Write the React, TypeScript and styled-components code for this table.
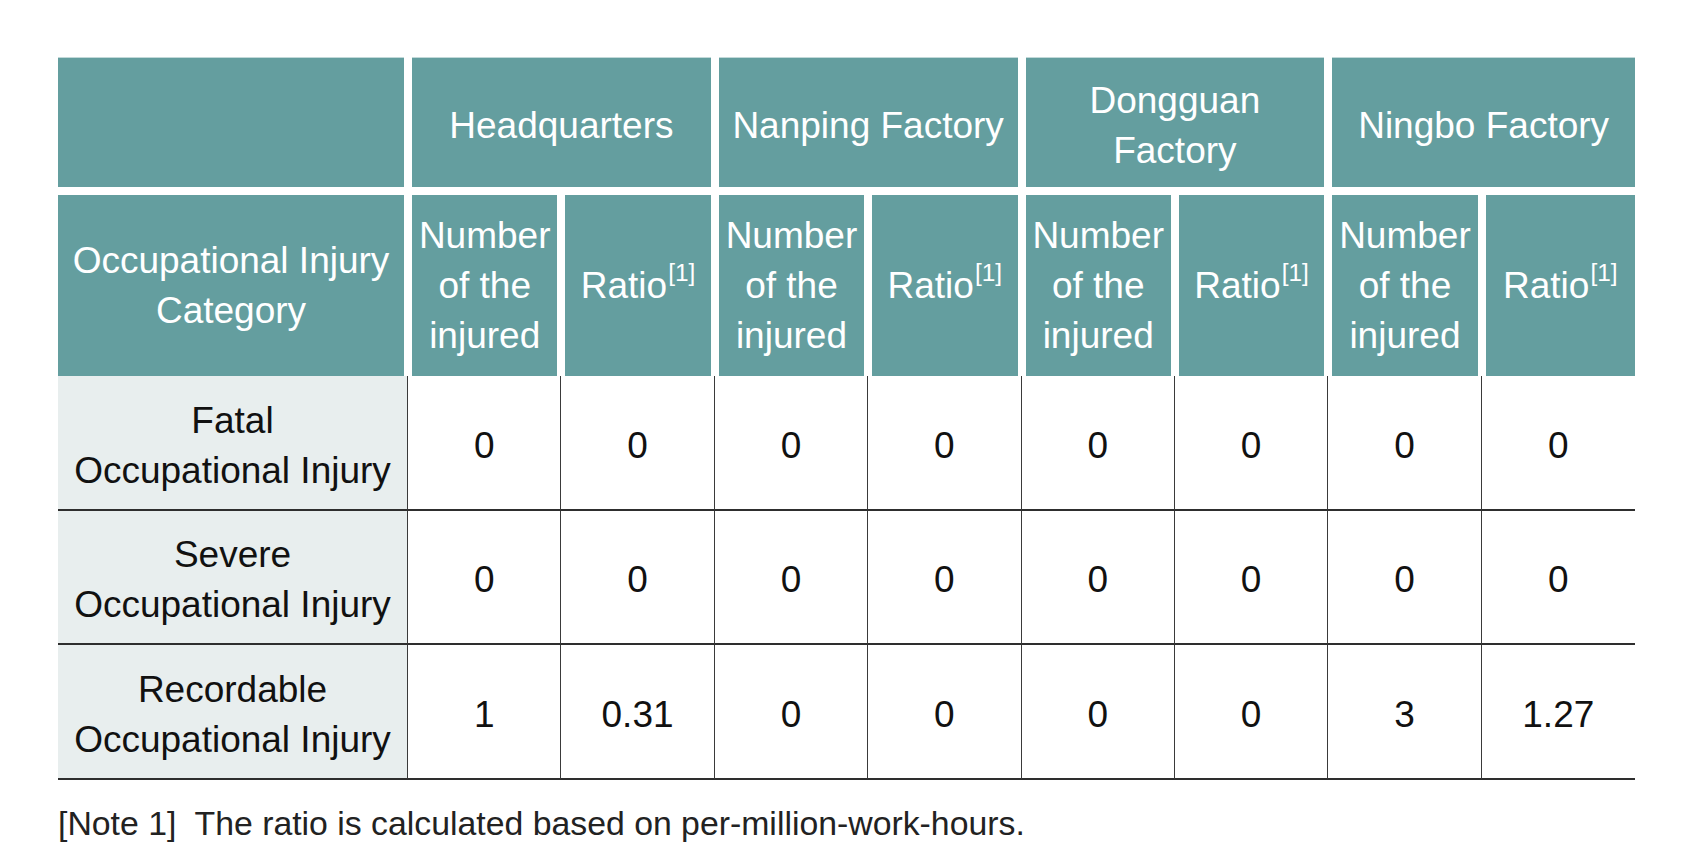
import styled, { createGlobalStyle } from 'styled-components'

const GlobalStyle = createGlobalStyle`
  html, body {
    margin: 0;
    padding: 0;
    background: #ffffff;
  }
  body {
    font-family: "Liberation Sans", Arial, Helvetica, sans-serif;
  }
`

const TEAL = '#649e9f'

const Page = styled.div`
  padding: 57px 0 0 58px;
  width: 1693px;
  height: 855px;
  box-sizing: border-box;
`

const Table = styled.div`
  display: grid;
  width: 1577px;
  grid-template-columns: 350px repeat(8, 1fr);
  grid-template-rows: 134px 185px 135px 134px 135px;
  font-size: 37px;
  line-height: 50px;
`

const HeadCell = styled.div<{ $row: 1 | 2; $span?: number; $first?: boolean; $last?: boolean }>`
  grid-column: span ${(p) => p.$span ?? 1};
  display: flex;
  align-items: center;
  justify-content: center;
  text-align: center;
  box-sizing: border-box;
  padding-top: ${(p) => (p.$row === 1 ? 8 : 0)}px;
  background: ${TEAL};
  background-clip: padding-box;
  color: #ffffff;
  border-style: solid;
  border-color: #ffffff;
  border-width: 0;
  border-left-width: ${(p) => (p.$first ? 0 : 4)}px;
  border-right-width: ${(p) => (p.$last ? 0 : 4)}px;
  border-top-width: ${(p) => (p.$row === 2 ? 4 : 0)}px;
  border-bottom-width: ${(p) => (p.$row === 1 ? 4 : 0)}px;
  box-shadow: ${(p) => (p.$row === 1 ? 'inset 0 1px 0 #c2d9d9' : 'none')};
  white-space: nowrap;
`

const BodyCell = styled.div<{ $label?: boolean; $last?: boolean }>`
  display: flex;
  align-items: center;
  justify-content: center;
  text-align: center;
  box-sizing: border-box;
  padding-top: 6px;
  background: ${(p) => (p.$label ? '#e8eeee' : '#ffffff')};
  color: #111111;
  border-right: ${(p) => (p.$last ? 'none' : '1.5px solid #3a3a3a')};
  border-bottom: 2px solid #2e2e2e;
  white-space: nowrap;
`

const Sup = styled.sup`
  font-size: 0.66em;
  line-height: 0;
  position: relative;
  top: -0.12em;
  margin-left: 1px;
`

const Note = styled.p`
  margin: 24px 0 0;
  font-size: 33.8px;
  line-height: 38px;
  color: #222222;
  white-space: pre;
`

const sites = [
  { key: 'hq', label: <>Headquarters</> },
  { key: 'np', label: <>Nanping Factory</> },
  { key: 'dg', label: <>Dongguan<br />Factory</> },
  { key: 'nb', label: <>Ningbo Factory</> },
]

const rows = [
  { key: 'fatal', label: 'Fatal', values: ['0', '0', '0', '0', '0', '0', '0', '0'] },
  { key: 'severe', label: 'Severe', values: ['0', '0', '0', '0', '0', '0', '0', '0'] },
  { key: 'rec', label: 'Recordable', values: ['1', '0.31', '0', '0', '0', '0', '3', '1.27'] },
]

export default function App() {
  return (
    <Page>
      <GlobalStyle />
      <Table>
        <HeadCell $row={1} $first />
        {sites.map((s, i) => (
          <HeadCell key={s.key} $row={1} $span={2} $last={i === sites.length - 1}>
            <span>{s.label}</span>
          </HeadCell>
        ))}

        <HeadCell $row={2} $first>
          <span>Occupational Injury<br />Category</span>
        </HeadCell>
        {sites.map((s, i) => [
          <HeadCell key={`${s.key}-n`} $row={2}>
            <span>Number<br />of the<br />injured</span>
          </HeadCell>,
          <HeadCell key={`${s.key}-r`} $row={2} $last={i === sites.length - 1}>
            <span>Ratio<Sup>[1]</Sup></span>
          </HeadCell>,
        ])}

        {rows.map((r) => [
          <BodyCell key={`${r.key}-l`} $label>
            <span>{r.label}<br />Occupational Injury</span>
          </BodyCell>,
          ...r.values.map((v, i) => (
            <BodyCell key={`${r.key}-${i}`} $last={i === r.values.length - 1}>
              {v}
            </BodyCell>
          )),
        ])}
      </Table>
      <Note>{'[Note 1]  The ratio is calculated based on per-million-work-hours.'}</Note>
    </Page>
  )
}
